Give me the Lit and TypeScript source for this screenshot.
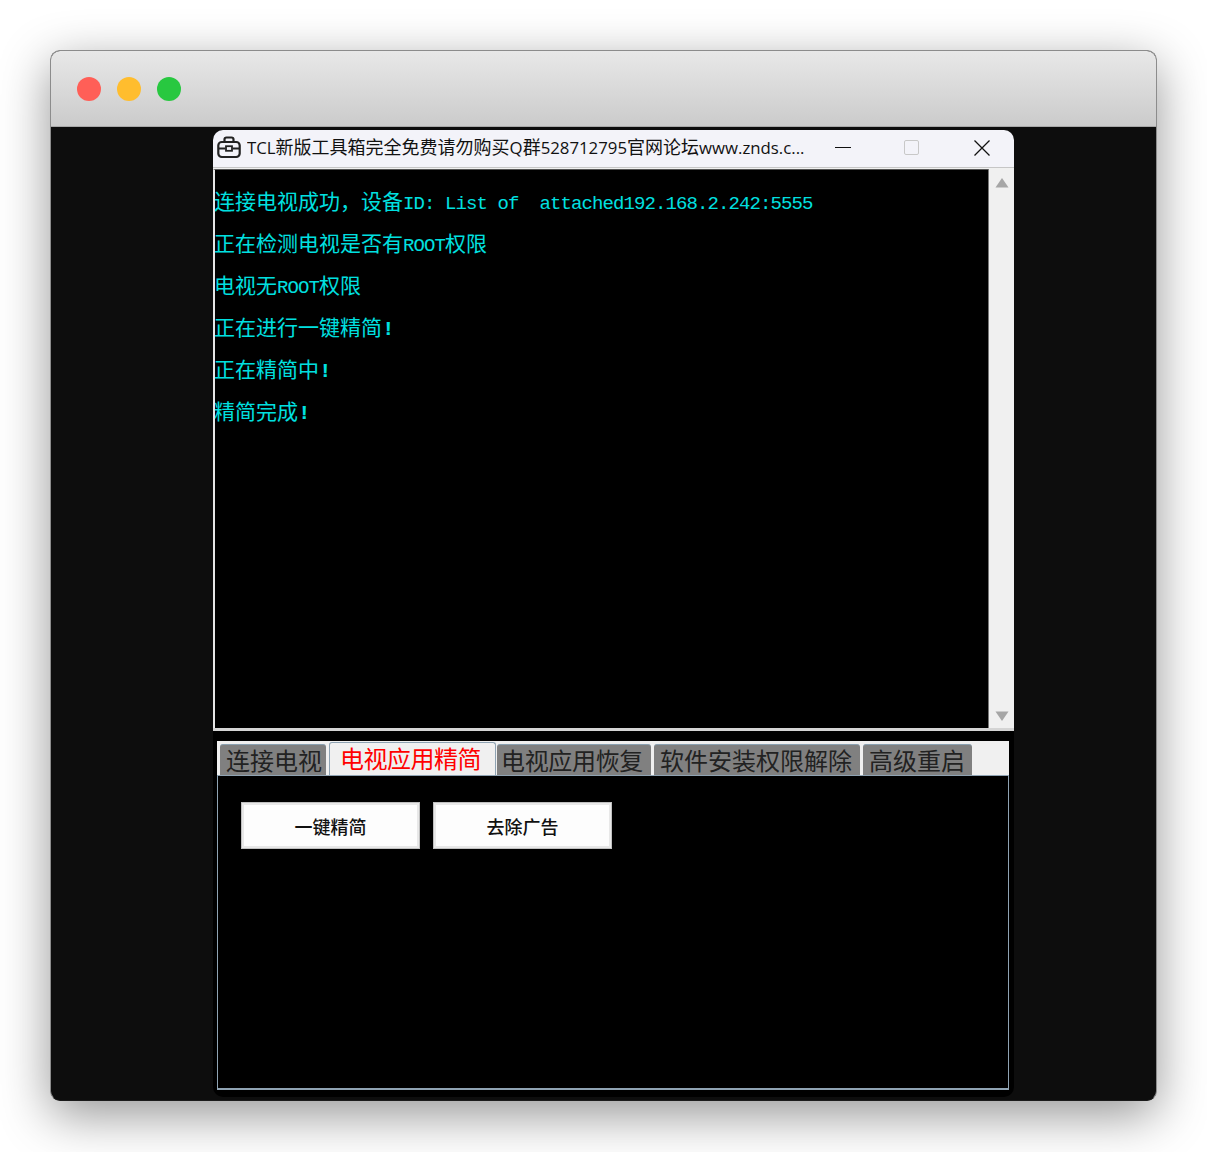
import { LitElement, html, css } from "lit";
import { customElement } from "lit/decorators.js";

type Run = { t: string; kind?: "lat" | "bang" };
const L = (t: string): Run => ({ t, kind: "lat" });
const B: Run = { t: "!", kind: "bang" };
const C = (t: string): Run => ({ t });

const LOG: Run[][] = [
  [C("连接电视成功，设备"), L("ID: List of  attached192.168.2.242:5555")],
  [C("正在检测电视是否有"), L("ROOT"), C("权限")],
  [C("电视无"), L("ROOT"), C("权限")],
  [C("正在进行一键精简"), B],
  [C("正在精简中"), B],
  [C("精简完成"), B],
];

@customElement("app-root")
export class AppRoot extends LitElement {
  static styles = css`
    :host { display: block; height: 1152px; overflow: hidden; background: #fff; box-sizing: border-box; padding: 50px 50px 0 50px; }
    .shadow { border-radius: 10px; box-shadow: 0 14px 50px rgba(0,0,0,.42); }
    .window { width: 1107px; height: 1051px; box-sizing: border-box; border: 1px solid #8c8c8c; border-bottom-color: #1a1a1a; border-radius: 10px; overflow: hidden; background: #0d0d0d; display: flex; flex-direction: column; }
    .bar { height: 76px; flex: none; box-sizing: border-box; background: linear-gradient(#e8e8e8, #cbcbcb); border-bottom: 1px solid #a8a8a8; display: flex; align-items: center; gap: 16px; padding: 0 0 0 26px; }
    .dot { width: 24px; height: 24px; border-radius: 50%; }
    .r { background: #ff5f57; } .y { background: #ffbd2e; } .g { background: #28c840; }
    .desk { flex: 1; padding: 3px 0 0 162px; }
    .app { width: 801px; height: 967px; background: #000; border-radius: 10px; overflow: hidden; display: flex; flex-direction: column; }
    .title { height: 38px; flex: none; box-sizing: border-box; background: #f3f3f9; border-bottom: 1px solid #c6c6c6; display: flex; align-items: center; padding: 0 0 0 4px; color: #111; font: 18px "Noto Sans CJK SC", sans-serif; }
    .title svg { flex: none; }
    .ttext { margin: -5px 0 0 6px; width: 560px; white-space: nowrap; overflow: hidden; line-height: 26px; }
    .tl { font: 16.8px "Open Sans", sans-serif; }
    .ctl { flex: none; }
    .icon { margin-top: -3px; }
    .min { width: 16px; height: 1px; background: #111; margin: -2px 0 0 28px; }
    .max { width: 15px; height: 15px; box-sizing: border-box; border: 1px solid #c8c8c8; border-radius: 2px; margin: -2px 0 0 53px; }
    .close { margin: -2px 0 0 55px; }
    .logwrap { height: 563px; flex: none; display: flex; box-sizing: border-box; border-top: 1px solid #f0f0f0; border-bottom: 3px solid #d4d4d4; }
    .log { flex: 1; box-sizing: border-box; border-left: 2px solid #e6e6e6; border-top: 1px solid #555; padding: 9px 0 0 0; color: #00e0e0; font: 21px/42px "Noto Sans CJK SC", sans-serif; }
    .line { height: 42px; white-space: pre; margin-left: -1px; }
    .lat { font: 19px/42px "Liberation Mono", monospace; letter-spacing: -0.9px; }
    .bang { font: 700 21px/42px "Liberation Mono", monospace; letter-spacing: -2px; }
    .sb { width: 26px; flex: none; background: #f0f0f0; border-left: 1px solid #777; box-sizing: border-box; display: flex; flex-direction: column; justify-content: space-between; align-items: center; padding: 9px 0 7px; }
    .tabsarea { flex: 1; padding: 10px 5px 7px 4px; display: flex; flex-direction: column; }
    .tabs { height: 35px; flex: none; background: #f0f0f0; display: flex; gap: 3px; padding: 3px 0 0 3px; box-sizing: border-box; border-bottom: 1px solid #8fa3b3; }
    .tab { box-sizing: border-box; background: #808080; color: #222; font: 24px/29px "Noto Sans CJK SC", sans-serif; border-top: 1px solid #8aa0b0; border-radius: 3px 3px 0 0; white-space: nowrap; }
    .t1 { padding: 0 4px 0 6px; }
    .t3 { padding: 0 8px 0 4px; letter-spacing: -0.33px; }
    .t4 { padding: 0 8px 0 6px; }
    .t5 { padding: 0 7px 0 6px; }
    .tab.on { background: #f0f0f0; color: #f00; padding: 0 14px 0 10px; margin: -2px -2px 0 0; height: 33px; letter-spacing: -0.5px; border: 1px solid #8fa3b3; border-bottom: none; line-height: 30px; }
    .panel { flex: 1; box-sizing: border-box; border: 1px solid #8fa3b3; border-top: none; border-bottom-width: 2px; background: #000; padding: 26px 0 0 23px; display: flex; gap: 13px; align-items: flex-start; }
    .btn { width: 179px; height: 47px; box-sizing: border-box; background: #fdfdfd; border: 1px solid #c0c0c0; box-shadow: inset 0 0 0 2px #e8e8e8; color: #111; font: 500 18px "Noto Sans CJK SC", sans-serif; display: flex; align-items: center; justify-content: center; }
  `;

  render() {
    return html`
      <div class="shadow"><div class="window">
        <div class="bar"><div class="dot r"></div><div class="dot y"></div><div class="dot g"></div></div>
        <div class="desk">
          <div class="app">
            <div class="title">
              <svg class="icon" width="24" height="24" viewBox="0 0 24 24" fill="none" stroke="#222" stroke-width="2.2">
                <path d="M7.5 7V4.5a2 2 0 0 1 2-2h5a2 2 0 0 1 2 2V7" />
                <rect x="1.3" y="7" width="21.4" height="15" rx="3.5" />
                <path d="M1.3 13.5h7M15.7 13.5h7" />
                <rect x="9" y="11.2" width="6" height="4.6" stroke-width="1.8" />
              </svg>
              <div class="ttext"><span class="tl">TCL</span>新版工具箱完全免费请勿购买<span class="tl">Q</span>群<span class="tl">528712795</span>官网论坛<span class="tl">www.znds.c...</span></div>
              <div class="ctl min"></div>
              <div class="ctl max"></div>
              <svg class="ctl close" width="16" height="16" viewBox="0 0 16 16" stroke="#111" stroke-width="1.3"><path d="M.5.5l15 15M15.5.5l-15 15" /></svg>
            </div>
            <div class="logwrap">
              <div class="log">
                ${LOG.map(
                  (runs) => html`<div class="line">${runs.map((r) => (r.kind ? html`<span class=${r.kind}>${r.t}</span>` : r.t))}</div>`
                )}
              </div>
              <div class="sb">
                <svg width="14" height="10" viewBox="0 0 14 10"><path d="M7 0l6.5 9.5H.5z" fill="#a6a6a6" /></svg>
                <svg width="14" height="10" viewBox="0 0 14 10"><path d="M7 10L.5.5h13z" fill="#a6a6a6" /></svg>
              </div>
            </div>
            <div class="tabsarea">
              <div class="tabs">
                <div class="tab t1">连接电视</div>
                <div class="tab on">电视应用精简</div>
                <div class="tab t3">电视应用恢复</div>
                <div class="tab t4">软件安装权限解除</div>
                <div class="tab t5">高级重启</div>
              </div>
              <div class="panel">
                <div class="btn">一键精简</div>
                <div class="btn">去除广告</div>
              </div>
            </div>
          </div>
        </div>
      </div></div>
    `;
  }
}
